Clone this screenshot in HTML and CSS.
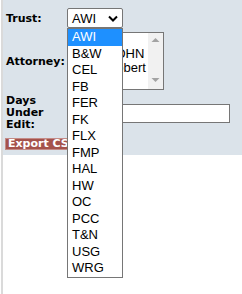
FILE: index.html
```html
<!DOCTYPE html>
<html>
<head>
<meta charset="utf-8">
<link rel="stylesheet" href="styles.css">
</head>
<body>
<div class="page">
  <div class="panel">
    <div class="form">
      <label class="lbl">Trust:</label>
      <div class="select">
        <span>AWI</span>
        <svg class="chev" width="10" height="7" viewBox="0 0 10 7"><polyline points="1,1.5 5,5.5 9,1.5" fill="none" stroke="#000" stroke-width="2"/></svg>
      </div>
      <label class="lbl">Attorney:</label>
      <div class="listbox">
        <div class="opts">
          <div class="opt">All</div>
          <div class="opt">KING, JOHN</div>
          <div class="opt">Bush, Robert</div>
          <div class="opt">Lee, Ann</div>
        </div>
        <div class="sbar">
          <svg width="15" height="56" viewBox="0 0 15 56"><polygon points="3.5,9 7.5,5 11.5,9" fill="#a3a3a3"/><polygon points="3.5,45 7.5,49 11.5,45" fill="#a3a3a3"/></svg>
        </div>
      </div>
      <label class="lbl days">Days Under Edit:</label>
      <input class="text" type="text">
    </div>
    <button class="export">Export CSV</button>
  </div>
  <div class="popup">
    <div class="item sel">AWI</div>
    <div class="item">B&amp;W</div>
    <div class="item">CEL</div>
    <div class="item">FB</div>
    <div class="item">FER</div>
    <div class="item">FK</div>
    <div class="item">FLX</div>
    <div class="item">FMP</div>
    <div class="item">HAL</div>
    <div class="item">HW</div>
    <div class="item">OC</div>
    <div class="item">PCC</div>
    <div class="item">T&amp;N</div>
    <div class="item">USG</div>
    <div class="item">WRG</div>
  </div>
</div>
</body>
</html>
```
FILE: styles.css
```css
html, body {
  margin: 0;
  padding: 0;
  background: #fff;
}
.page {
  position: relative;
  width: 242px;
  height: 294px;
  overflow: hidden;
  border-left: 2px solid #dadada;
  margin-left: 1px;
  box-sizing: border-box;
}
.panel {
  background: #dbe3ea;
  height: 155px;
  margin-left: -3px;
  padding: 8px 0 0 6px;
  box-sizing: border-box;
}
.form {
  display: grid;
  grid-template-columns: 61px 162px;
  row-gap: 4px;
  align-items: center;
}
.lbl {
  font-family: "DejaVu Sans", Verdana, sans-serif;
  font-weight: bold;
  font-size: 11px;
  color: #000;
}
.days {
  line-height: 12px;
  width: 50px;
  padding: 1px 0;
}
.select {
  width: 56px;
  height: 20px;
  box-sizing: border-box;
  border: 1px solid #767676;
  border-radius: 2px;
  background: #fff;
  display: flex;
  align-items: center;
  justify-content: space-between;
  padding: 0 4px 0 4px;
  font-family: "Liberation Sans", Arial, sans-serif;
  font-size: 13px;
}
.chev { display: block; }
.listbox {
  width: 97px;
  height: 58px;
  box-sizing: border-box;
  border: 1px solid #767676;
  background: #fff;
  display: flex;
  font-family: "Liberation Sans", Arial, sans-serif;
  font-size: 13px;
}
.opts {
  flex: 1;
  overflow: hidden;
  white-space: nowrap;
}
.opt {
  height: 14px;
  line-height: 14px;
  padding-left: 2px;
}
.sbar {
  width: 15px;
  background: #f1f1f1;
}
.sbar svg { display: block; }
.text {
  width: 163px;
  height: 19px;
  box-sizing: border-box;
  border: 1px solid #767676;
  margin: 0;
  padding: 0;
  background: #fff;
}
.export {
  display: block;
  margin: 6px 0 0 -1px;
  padding: 0 2px;
  height: 12px;
  line-height: 10px;
  border: 1px solid #c48b86;
  background: #a5534c;
  color: #fff;
  font-family: "DejaVu Sans", Verdana, sans-serif;
  font-weight: bold;
  font-size: 11px;
}
.popup {
  position: absolute;
  left: 64px;
  top: 28px;
  width: 56px;
  box-sizing: border-box;
  border: 1px solid #767676;
  background: #fff;
  font-family: "Liberation Sans", Arial, sans-serif;
  font-size: 13px;
  color: #000;
}
.item {
  height: 16.5px;
  line-height: 16.5px;
  padding-left: 4px;
}
.item.sel {
  background: #1e90ff;
  color: #fff;
}
```
